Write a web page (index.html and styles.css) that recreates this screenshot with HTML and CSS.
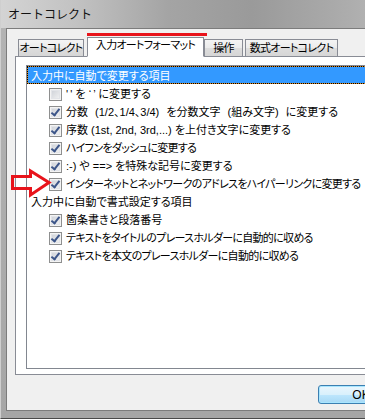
FILE: index.html
```html
<!DOCTYPE html>
<html lang="ja">
<head>
    <meta charset="UTF-8">
    <meta name="viewport" content="width=device-width, initial-scale=1.0">
    <title>オートコレクト</title>
    <link rel="stylesheet" href="styles.css">
</head>
<body>
    <div class="window">
        <div class="titlebar">オートコレクト</div>
        <div class="dialog">
            <div class="tabs">
                <div class="tab t1">オートコレクト</div>
                <div class="tab active">入力オートフォーマット</div>
                <div class="tab t3">操作</div>
                <div class="tab t4">数式オートコレクト</div>
            </div>
            <div class="panel">
                <ul class="list">
                    <li class="group selected">入力中に自動で変更する項目</li>
                    <li><span class="cb"></span>'&#8201;' を ‘&#8201;’ に変更する</li>
                    <li class="spaced"><span class="cb on"></span>分数 (1/2、1/4、3/4) を分数文字 (組み文字) に変更する</li>
                    <li><span class="cb on"></span>序数 (1st, 2nd, 3rd,...) を上付き文字に変更する</li>
                    <li class="kana"><span class="cb on"></span>ハイフンをダッシュに変更する</li>
                    <li><span class="cb on"></span>:-) や ==&gt; を特殊な記号に変更する</li>
                    <li class="kana"><span class="cb on"></span>インターネットとネットワークのアドレスをハイパーリンクに変更する</li>
                    <li class="group">入力中に自動で書式設定する項目</li>
                    <li><span class="cb on"></span>箇条書きと段落番号</li>
                    <li class="kana"><span class="cb on"></span>テキストをタイトルのプレースホルダーに自動的に収める</li>
                    <li class="kana"><span class="cb on"></span>テキストを本文のプレースホルダーに自動的に収める</li>
                </ul>
            </div>
            <div class="buttons">
                <button class="btn default">OK</button>
            </div>
        </div>

        <!-- annotations drawn over the dialog -->
        <span class="mark"></span>
        <svg class="arrow" width="44" height="32" viewBox="0 0 44 32">
            <polygon points="3.5,8.5 21.5,8.5 21.5,3 40,14.5 21.5,27 21.5,20.5 3.5,20.5" fill="none" stroke="#e8131b" stroke-width="3"/>
        </svg>
    </div>
</body>
</html>
```

FILE: styles.css
```css
body {
    margin: 0;
    overflow: hidden;
    font-family: "Liberation Sans", "Noto Sans CJK JP", sans-serif;
    font-size: 11px;
    color: #000;
}
.window {
    position: relative;
    width: 420px;
    height: 419px;
    box-sizing: border-box;
    background: linear-gradient(to bottom, #b4b4b4, #a6a6a6);
    border-left: 1px solid #cfcfcf;
    border-bottom: 1px solid #4a4a4a;
}
.titlebar {
    height: 28px;
    line-height: 28px;
    padding-left: 7px;
    font-family: "Noto Sans CJK JP", sans-serif;
    font-size: 12px;
    background: linear-gradient(to right, #d4d4d4 0, #c2c2c2 18%, #a4a4a4 40%, #9a9a9a 60%, #aaaaaa 80%, #bdbdbd 100%);
    color: #111;
}
.dialog {
    margin: 0 7px 0 5px;
    padding: 8px 8px 6px 8px;
    border: 1px solid #7c7c7c;
    background: #f0f0f0;
}
.tabs {
    display: flex;
    align-items: flex-end;
    padding-left: 3px;
    margin-bottom: -1px;
    position: relative;
    z-index: 1;
}
.tab {
    box-sizing: border-box;
    height: 18px;
    line-height: 16px;
    border: 1px solid #898c95;
    background: linear-gradient(to bottom, #f4f4f4 0, #ebebeb 50%, #dddddd 51%, #d6d6d6 100%);
    text-align: center;
    white-space: nowrap;
    letter-spacing: -0.7px;
    font-feature-settings: "palt";
}
.t1 {
    width: 66px;
    margin-right: 3px;
}
.tab.active {
    width: 117px;
    height: 20px;
    line-height: 15px;
    border-bottom-color: #fff;
    background: #fff;
}
.t3 {
    width: 39px;
    margin-right: 2px;
}
.t4 {
    width: 93px;
}
.panel {
    box-sizing: border-box;
    height: 319px;
    padding: 8px 0 5px 10px;
    border: 1px solid #898c95;
    background: #fff;
}
.list {
    box-sizing: border-box;
    height: 304px;
    margin: 0;
    padding: 0;
    list-style: none;
    border: 1px solid #828790;
    background: #fff;
}
.list li {
    display: flex;
    align-items: center;
    height: 18px;
    padding-left: 22px;
    white-space: nowrap;
    font-feature-settings: "palt";
}
.list li.kana {
    letter-spacing: -0.7px;
}
.list li.spaced {
    word-spacing: 4px;
}
.list li.group {
    padding-left: 4px;
}
.list li.selected {
    background: #3399ff;
    color: #fff;
    box-shadow: inset 0 0 0 1px #d9861c;
    outline: 1px dotted #000;
    outline-offset: -1px;
}
.cb {
    position: relative;
    flex: none;
    box-sizing: border-box;
    width: 13px;
    height: 13px;
    margin: 3px 4px 0 0;
    border: 1px solid #8e8f8f;
    background: linear-gradient(135deg, #c9cdd4, #f6f6f6);
    box-shadow: inset 0 0 0 1px #f4f4f4, inset 0 0 0 2px #e2e4e8;
}
.cb.on::after {
    content: "";
    position: absolute;
    left: 3px;
    top: 0;
    width: 3px;
    height: 7px;
    border: solid #3c5589;
    border-width: 0 2px 2px 0;
    transform: rotate(38deg);
}
.buttons {
    display: flex;
    justify-content: flex-end;
    margin-top: 10px;
}
.btn {
    box-sizing: border-box;
    width: 86px;
    height: 19px;
    padding: 0;
    border: 1px solid #707070;
    border-radius: 3px;
    font-family: "Liberation Sans", sans-serif;
    font-size: 12px;
    line-height: 16px;
    color: #000;
}
.btn.default {
    border-color: #3c7fb1;
    background: linear-gradient(to bottom, #eaf6fd 0, #d9f0fc 50%, #bee6fd 51%, #a7d9f5 100%);
    box-shadow: inset 0 0 0 1px #a8e6ff;
}
.mark {
    position: absolute;
    left: 86px;
    top: 33px;
    width: 120px;
    height: 3px;
    background: #e8131b;
}
.arrow {
    position: absolute;
    left: 8px;
    top: 168px;
}
```
